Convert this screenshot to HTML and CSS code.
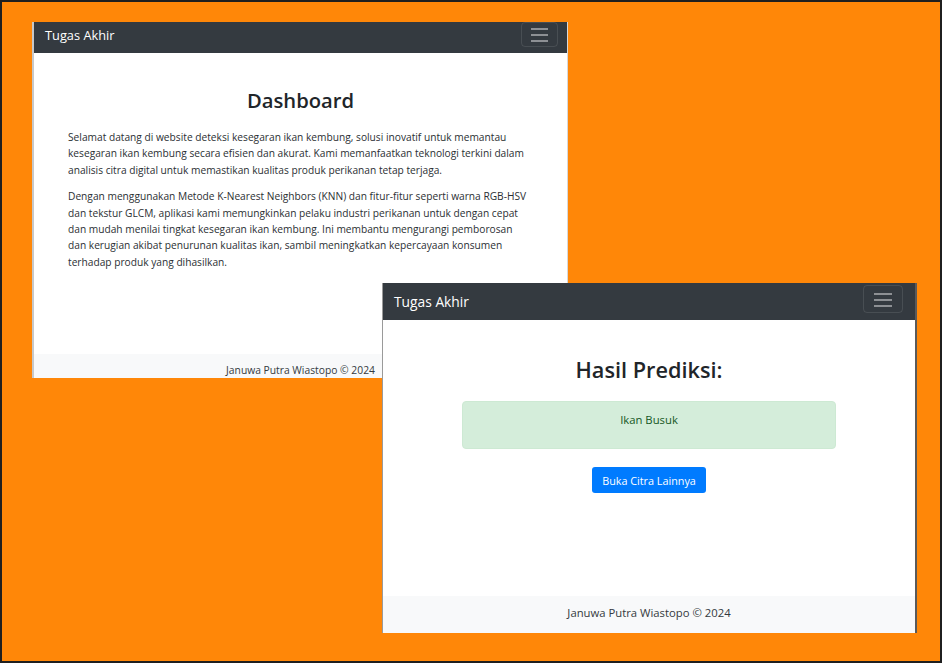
FILE: index.html
```html
<!DOCTYPE html>
<html lang="id">
<head>
<meta charset="utf-8">
<title>Tugas Akhir</title>
<link rel="stylesheet" href="styles.css">
</head>
<body>
<div class="desktop">
  <section class="window win-dashboard">
    <nav class="navbar">
      <span class="brand">Tugas Akhir</span>
      <button class="toggler" type="button" aria-label="Menu">
        <span class="bar"></span><span class="bar"></span><span class="bar"></span>
      </button>
    </nav>
    <main class="content">
      <h1 class="title">Dashboard</h1>
      <p class="text">Selamat datang di website deteksi kesegaran ikan kembung, solusi inovatif untuk memantau kesegaran ikan kembung secara efisien dan akurat. Kami memanfaatkan teknologi terkini dalam analisis citra digital untuk memastikan kualitas produk perikanan tetap terjaga.</p>
      <p class="text">Dengan menggunakan Metode K-Nearest Neighbors (KNN) dan fitur-fitur seperti warna RGB-HSV dan tekstur GLCM, aplikasi kami memungkinkan pelaku industri perikanan untuk dengan cepat dan mudah menilai tingkat kesegaran ikan kembung. Ini membantu mengurangi pemborosan dan kerugian akibat penurunan kualitas ikan, sambil meningkatkan kepercayaan konsumen terhadap produk yang dihasilkan.</p>
    </main>
    <footer class="footer">Januwa Putra Wiastopo © 2024</footer>
  </section>

  <section class="window win-result">
    <nav class="navbar">
      <span class="brand">Tugas Akhir</span>
      <button class="toggler" type="button" aria-label="Menu">
        <span class="bar"></span><span class="bar"></span><span class="bar"></span>
      </button>
    </nav>
    <main class="content">
      <h1 class="title">Hasil Prediksi:</h1>
      <div class="alert"><p>Ikan Busuk</p></div>
      <a class="btn" href="#">Buka Citra Lainnya</a>
    </main>
    <footer class="footer">Januwa Putra Wiastopo © 2024</footer>
  </section>
</div>
</body>
</html>
```
FILE: styles.css
```css
* { box-sizing: border-box; }

html, body {
  margin: 0;
  padding: 0;
}

body {
  font-family: "Open Sans", "Noto Sans", sans-serif;
  color: #212529;
}

.desktop {
  position: relative;
  width: 942px;
  height: 663px;
  background: #ff8708;
  border: 2px solid #1f1f1f;
  overflow: hidden;
}

.window {
  position: absolute;
  display: flex;
  flex-direction: column;
  background: #fff;
  overflow: hidden;
}

.navbar {
  display: flex;
  justify-content: space-between;
  background: #343a40;
  flex: 0 0 auto;
}

.brand {
  color: #fff;
  align-self: center;
  white-space: nowrap;
}

.toggler {
  display: flex;
  flex-direction: column;
  align-items: center;
  background: transparent;
  border: 1px solid rgba(255, 255, 255, 0.1);
  border-radius: 4px;
  padding: 0;
  margin: 0;
}

.bar {
  display: block;
  height: 2px;
  background: #8d9094;
}

.content {
  flex: 1 1 auto;
  display: flex;
  flex-direction: column;
  align-items: center;
}

.title {
  margin: 0;
  font-weight: 600;
  color: #212529;
}

.footer {
  flex: 0 0 auto;
  background: #f8f9fa;
  text-align: center;
  color: #343a40;
  white-space: nowrap;
}

/* ---------- Window 1: Dashboard ---------- */
.win-dashboard {
  left: 30px;
  top: 20px;
  width: 536px;
  height: 356px;
  border-left: 2px solid #c8c8c8;
  border-right: 1px solid #d8d8d8;
}

.win-dashboard .navbar {
  height: 31px;
  padding: 0 9px 0 11px;
}

.win-dashboard .brand {
  font-size: 12.8px;
  margin-top: -5px;
}

.win-dashboard .toggler {
  width: 37px;
  height: 25px;
  padding-top: 5px;
  gap: 4px;
}

.win-dashboard .bar { width: 17px; }

.win-dashboard .content {
  padding: 34px 34px 0 34px;
}

.win-dashboard .title {
  font-size: 20.2px;
  line-height: 26px;
  margin-bottom: 16px;
}

.win-dashboard .text {
  margin: 0 0 10.5px;
  font-size: 10.2px;
  line-height: 16.3px;
  color: #2b2f33;
  align-self: stretch;
}

.win-dashboard .footer {
  height: 24px;
  font-size: 10.3px;
  line-height: 16px;
  padding-top: 8px;
}

/* ---------- Window 2: Hasil Prediksi ---------- */
.win-result {
  left: 380px;
  top: 281px;
  width: 535px;
  height: 350px;
  border-left: 1px solid #9a9a9a;
  border-right: 2px solid #5a5a5a;
}

.win-result .navbar {
  height: 37px;
  padding: 2px 12px 0 11px;
}

.win-result .brand {
  font-size: 13.8px;
  margin-top: -3px;
}

.win-result .toggler {
  width: 40px;
  height: 28px;
  padding-top: 7px;
  gap: 4px;
}

.win-result .bar { width: 18px; }

.win-result .content {
  padding-top: 35px;
}

.win-result .title {
  font-size: 21.7px;
  line-height: 30px;
  margin-bottom: 16px;
}

.alert {
  width: 374px;
  height: 48px;
  background: #d4edda;
  border: 1px solid #cde9d3;
  border-radius: 4px;
  color: #155724;
  text-align: center;
  padding-top: 10px;
}

.alert p {
  margin: 0;
  font-size: 11.3px;
  line-height: 16px;
}

.btn {
  margin-top: 18px;
  display: flex;
  align-items: center;
  justify-content: center;
  width: 114px;
  height: 26px;
  background: #007bff;
  color: #fff;
  border-radius: 3px;
  font-size: 10.8px;
  text-decoration: none;
}

.win-result .footer {
  height: 37px;
  font-size: 11.3px;
  line-height: 16px;
  padding-top: 9px;
}
```
